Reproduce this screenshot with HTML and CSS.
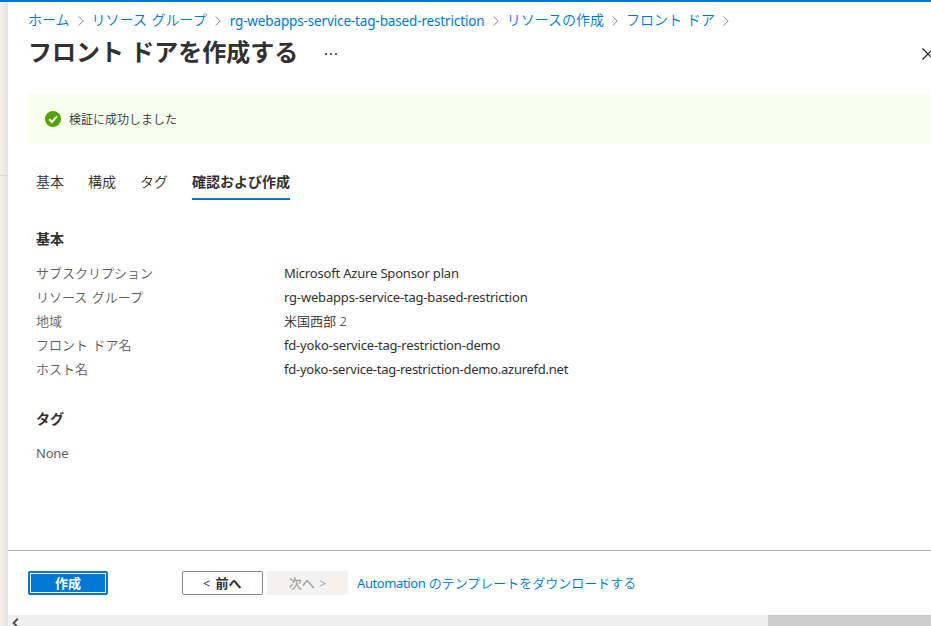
FILE: index.html
```html
<!DOCTYPE html>
<html lang="ja">

<head>
  <meta charset="UTF-8">
  <meta name="viewport" content="width=device-width, initial-scale=1.0">
  <title>フロント ドアを作成する</title>
  <link rel="stylesheet" href="styles.css">
</head>

<body>
  <div class="portal">
    <div class="side-edge"></div>
    <div class="blade">
      <!-- パンくずリスト -->
      <nav class="breadcrumb">
        <a>ホーム</a>
        <svg class="chevron" viewBox="0 0 6 10"><path d="M.7.5 5.2 5 .7 9.5" /></svg>
        <a>リソース グループ</a>
        <svg class="chevron" viewBox="0 0 6 10"><path d="M.7.5 5.2 5 .7 9.5" /></svg>
        <a class="latin">rg-webapps-service-tag-based-restriction</a>
        <svg class="chevron" viewBox="0 0 6 10"><path d="M.7.5 5.2 5 .7 9.5" /></svg>
        <a>リソースの作成</a>
        <svg class="chevron" viewBox="0 0 6 10"><path d="M.7.5 5.2 5 .7 9.5" /></svg>
        <a>フロント ドア</a>
        <svg class="chevron" viewBox="0 0 6 10"><path d="M.7.5 5.2 5 .7 9.5" /></svg>
      </nav>

      <!-- タイトル -->
      <header class="title-bar">
        <h1>フロント ドアを作成する</h1>
        <svg class="more" viewBox="0 0 12 2"><path d="M0 0h2v2H0zM5 0h2v2H5zM10 0h2v2h-2z" /></svg>
        <svg class="close" viewBox="0 0 12 12"><path d="M.5.5l11 11M11.5.5l-11 11" /></svg>
      </header>

      <!-- 検証結果 -->
      <div class="notice">
        <svg class="check" viewBox="0 0 16 16">
          <circle cx="8" cy="8" r="8" />
          <path d="M4.2 8.3 6.9 11l5-5.6" />
        </svg>
        <span>検証に成功しました</span>
      </div>

      <!-- タブ -->
      <div class="tabs">
        <span class="tab">基本</span>
        <span class="tab">構成</span>
        <span class="tab">タグ</span>
        <span class="tab active">確認および作成</span>
      </div>

      <main class="content">
        <h2>基本</h2>
        <dl class="summary">
          <dt>サブスクリプション</dt>
          <dd>Microsoft Azure Sponsor plan</dd>
          <dt>リソース グループ</dt>
          <dd>rg-webapps-service-tag-based-restriction</dd>
          <dt>地域</dt>
          <dd class="region">米国西部 2</dd>
          <dt>フロント ドア名</dt>
          <dd>fd-yoko-service-tag-restriction-demo</dd>
          <dt>ホスト名</dt>
          <dd class="host">fd-yoko-service-tag-restriction-demo.azurefd.net</dd>
        </dl>
        <h2>タグ</h2>
        <p class="none">None</p>
      </main>

      <!-- フッター -->
      <footer class="actions">
        <button class="btn primary">作成</button>
        <button class="btn prev"><span class="arrow">&lt;</span> 前へ</button>
        <button class="btn next" disabled>次へ <span class="arrow">&gt;</span></button>
        <a class="template-link"><span class="latin">Automation</span> のテンプレートをダウンロードする</a>
      </footer>

      <div class="scrollbar">
        <svg class="scroll-arrow" viewBox="0 0 7 10"><path d="M5.8.6 1.6 5l4.2 4.4" /></svg>
        <div class="thumb"></div>
      </div>
    </div>
  </div>
</body>

</html>
```
FILE: styles.css
```css
* {
  box-sizing: border-box;
}

body {
  margin: 0;
  overflow: hidden;
  background: #fff;
  color: #323130;
  font-family: "Noto Sans", "Noto Sans CJK JP", sans-serif;
  font-size: 13px;
}

a {
  color: #0078d4;
}

.portal {
  display: flex;
  height: 626px;
  border-top: 2px solid #0078d4;
}

.side-edge {
  width: 8px;
  flex: none;
  background: linear-gradient(to right, #f2f1f0, #e4e3e2);
}

.side-edge::before {
  content: "";
  display: block;
  height: 173px;
  border-bottom: 1px solid #dddcdb;
}

.blade {
  flex: 1;
  min-width: 0;
  display: flex;
  flex-direction: column;
}

/* パンくずリスト */
.breadcrumb {
  display: flex;
  align-items: center;
  height: 36px;
  padding-left: 20px;
  font-size: 14px;
  font-weight: 350;
  line-height: 20px;
  word-spacing: 1px;
  white-space: nowrap;
}

.breadcrumb .latin {
  width: 255px;
  margin: 2px 0 0 1px;
  font-size: 13.5px;
  font-weight: 400;
  letter-spacing: -0.14px;
}

.chevron {
  width: 6px;
  height: 10px;
  margin: 1px 8px 0;
  fill: none;
  stroke: #8a8886;
}

/* タイトル */
.title-bar {
  display: flex;
  align-items: center;
  height: 32px;
  padding-left: 20px;
}

h1 {
  width: 297px;
  margin: 0;
  padding-bottom: 4px;
  font-size: 24px;
  font-weight: 600;
  line-height: 28px;
  white-space: nowrap;
}

.more {
  width: 12px;
  height: 2px;
  fill: #605e5c;
}

.close {
  flex: none;
  width: 12px;
  height: 12px;
  margin-left: auto;
  margin-right: -3px;
  fill: none;
  stroke: #201f1e;
  stroke-width: 1.2;
}

/* 検証結果 */
.notice {
  display: flex;
  align-items: center;
  gap: 8px;
  height: 50px;
  margin: 24px 0 0 20px;
  padding-left: 17px;
  background: #f8ffef;
  font-size: 12px;
  font-weight: 350;
}

.check {
  width: 16px;
  height: 16px;
  fill: #57a300;
}

.check path {
  fill: none;
  stroke: #fff;
  stroke-width: 2;
}

/* タブ */
.tabs {
  display: flex;
  gap: 24px;
  margin: 20px 0 0 28px;
  font-size: 14px;
}

.tab {
  height: 36px;
  font-weight: 350;
  line-height: 35px;
}

.tab.active {
  border-bottom: 2px solid #0078d4;
  font-weight: 700;
}

/* 設定内容 */
.content {
  flex: 1;
  padding: 29px 0 0 28px;
}

h2 {
  margin: 0;
  font-size: 14px;
  font-weight: 700;
  line-height: 20px;
}

.summary {
  display: grid;
  grid-template-columns: 248px 1fr;
  grid-auto-rows: 24px;
  margin: 12px 0 28px;
  line-height: 24px;
}

dt,
.none {
  color: #605e5c;
}

dt {
  font-weight: 350;
  word-spacing: 1px;
}

dd {
  margin: 0;
  letter-spacing: -0.18px;
}

.region {
  font-weight: 350;
  letter-spacing: 0;
}

.host {
  letter-spacing: -0.25px;
}

.none {
  margin: 12px 0 0;
  line-height: 24px;
  letter-spacing: -0.2px;
}

/* フッター */
.actions {
  display: flex;
  align-items: center;
  height: 65px;
  padding-left: 20px;
  border-top: 1px solid #b3b2b1;
}

.btn {
  height: 24px;
  padding: 0;
  border: 1px solid #8a8886;
  border-radius: 2px;
  background: #fff;
  color: #323130;
  font-family: inherit;
  font-size: 13px;
  font-weight: 700;
  line-height: 20px;
}

.arrow {
  font-size: 12px;
  font-weight: 400;
}

.primary {
  width: 80px;
  border-color: #0078d4;
  outline: 1px solid #fff;
  outline-offset: -3px;
  background: #0078d4;
  color: #fff;
}

.prev {
  width: 81px;
  margin-left: 74px;
  word-spacing: 2px;
}

.next {
  width: 81px;
  margin-left: 4px;
  border-color: #f3f2f1;
  background: #f3f2f1;
  color: #a19f9d;
  font-weight: 500;
  word-spacing: 1px;
}

.template-link {
  margin-left: 9px;
  padding-bottom: 2px;
  font-weight: 350;
  white-space: nowrap;
}

.template-link .latin {
  font-weight: 400;
  letter-spacing: -0.4px;
}

/* 横スクロールバー */
.scrollbar {
  display: flex;
  height: 11px;
  overflow: hidden;
  background: #efefef;
}

.scroll-arrow {
  width: 7px;
  height: 10px;
  margin: 3px 0 0 4px;
  fill: none;
  stroke: #505050;
  stroke-width: 2;
}

.thumb {
  width: 163px;
  margin-left: auto;
  background: #cdcdcd;
}
```
